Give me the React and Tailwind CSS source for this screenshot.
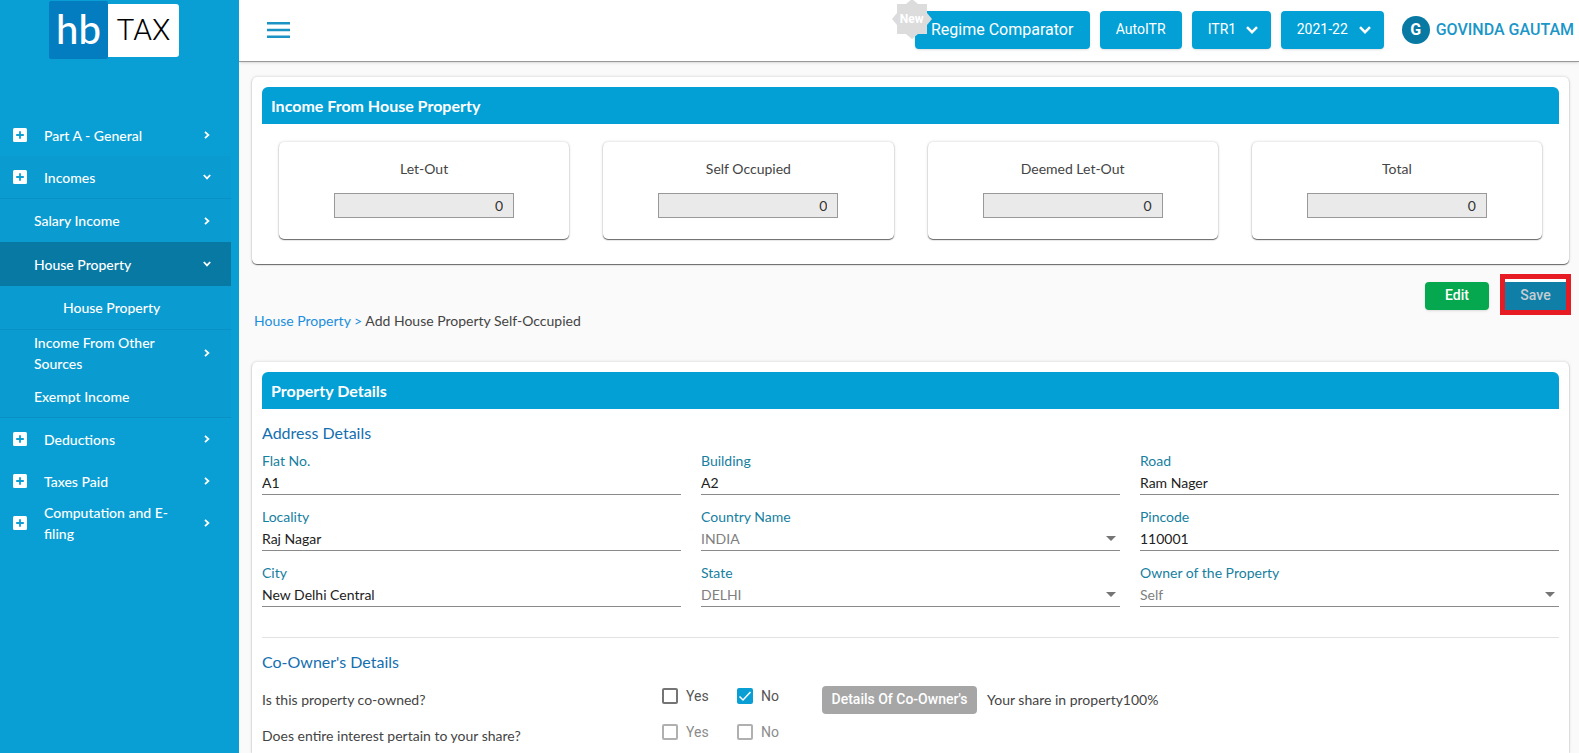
import { useState } from "react";

const NAV_BEFORE = [{ label: "Part A - General" }];
const NAV_AFTER = [
  { label: "Deductions" },
  { label: "Taxes Paid" },
  { label: "Computation and E-filing" },
];

const TOTALS = ["Let-Out", "Self Occupied", "Deemed Let-Out", "Total"];

const FIELDS = [
  { id: "flat", label: "Flat No.", value: "A1" },
  { id: "building", label: "Building", value: "A2" },
  { id: "road", label: "Road", value: "Ram Nager" },
  { id: "locality", label: "Locality", value: "Raj Nagar" },
  { id: "country", label: "Country Name", value: "INDIA", select: true },
  { id: "pincode", label: "Pincode", value: "110001" },
  { id: "city", label: "City", value: "New Delhi Central" },
  { id: "state", label: "State", value: "DELHI", select: true },
  { id: "owner", label: "Owner of the Property", value: "Self", select: true },
];

function Chevron({ down }) {
  return (
    <svg
      viewBox="0 0 10 10"
      className={`h-[10px] w-[10px] shrink-0 ${down ? "rotate-90" : ""}`}
      fill="none"
      stroke="currentColor"
      strokeWidth="1.8"
      aria-hidden="true"
    >
      <path d="M3 1.8 6.4 5 3 8.2" />
    </svg>
  );
}

function PlusBox() {
  return (
    <svg viewBox="0 0 14 14" className="h-[14px] w-[14px] shrink-0" aria-hidden="true">
      <rect width="14" height="14" rx="1.5" fill="#fff" />
      <path d="M7 3.2v7.6M3.2 7h7.6" stroke="#0b9ed3" strokeWidth="1.8" />
    </svg>
  );
}

function NavItem({ label, open }) {
  return (
    <button
      type="button"
      aria-expanded={Boolean(open)}
      className="flex h-[42px] w-full items-center pl-[13px] pr-[19px] text-left leading-[21px]"
    >
      <PlusBox />
      <span className="ml-[17px] w-[140px]">{label}</span>
      <span className="ml-auto">
        <Chevron down={open} />
      </span>
    </button>
  );
}

function Logo() {
  return (
    <a href="#home" className="ml-[49px] mt-[1px] flex w-fit items-center">
      <span className="flex h-[58px] w-[59px] items-center justify-center rounded-[2px] bg-[#047cc0] pb-[2px] text-[40px] font-medium leading-none text-white">
        hb
      </span>
      <span className="flex h-[53px] w-[71px] items-center justify-center rounded-r-[3px] bg-white font-['Roboto',sans-serif] text-[30px] font-light leading-none text-black">
        TAX
      </span>
    </a>
  );
}

function Sidebar() {
  return (
    <nav className="w-[239px] shrink-0 bg-[#0a9fd4] pr-2 text-[14px] font-medium text-white">
      <Logo />
      <div className="mt-[55px]">
        {NAV_BEFORE.map((item) => (
          <NavItem key={item.label} {...item} />
        ))}
        <div className="bg-[#0a9bd0]">
          <NavItem label="Incomes" open />
          <div className="border-y border-[#0990c4] leading-[21px]">
            <button type="button" className="flex h-[43px] w-full items-center justify-between pl-[34px] pr-[19px]">
              Salary Income
              <Chevron />
            </button>
            <button
              type="button"
              className="flex h-[44px] w-full items-center justify-between bg-[#0779a3] pl-[34px] pr-[19px]"
            >
              House Property
              <Chevron down />
            </button>
            <a href="#house-property" className="flex h-[44px] items-center border-b border-[#0990c4] pl-[63px]">
              House Property
            </a>
            <button
              type="button"
              className="flex h-[45px] w-full items-center justify-between pl-[34px] pr-[19px] text-left"
            >
              <span className="w-[130px]">Income From Other Sources</span>
              <Chevron />
            </button>
            <a href="#exempt-income" className="flex h-[42px] items-center pl-[34px]">
              Exempt Income
            </a>
          </div>
        </div>
        {NAV_AFTER.map((item) => (
          <NavItem key={item.label} {...item} />
        ))}
      </div>
    </nav>
  );
}

function HeaderSelect({ label, value, className }) {
  return (
    <div className={`relative ${className}`}>
      <select
        aria-label={label}
        defaultValue={value}
        className="h-[38px] w-full appearance-none rounded bg-[#03a0d6] pl-4 pr-8 text-[14px] text-white shadow"
      >
        <option>{value}</option>
      </select>
      <svg
        viewBox="0 0 12 8"
        className="pointer-events-none absolute right-[13px] top-[15px] h-2 w-3"
        fill="none"
        stroke="#fff"
        strokeWidth="2.5"
        aria-hidden="true"
      >
        <path d="m1 1.2 5 5 5-5" />
      </svg>
    </div>
  );
}

function Header() {
  return (
    <header className="flex h-[62px] items-center border-b border-[#999] bg-white pb-[2px] pl-7 pr-[5px] font-['Roboto',sans-serif] shadow">
      <button type="button" aria-label="Toggle menu">
        <svg viewBox="0 0 23 16" className="h-4 w-[23px]" aria-hidden="true">
          <path d="M0 1.2h23M0 8h23M0 14.8h23" stroke="#1b93c4" strokeWidth="2.4" />
        </svg>
      </button>
      <div className="ml-auto flex items-center gap-[10px]">
        <div className="relative">
          <button
            type="button"
            className="h-[38px] w-[175px] rounded bg-[#03a0d6] text-[16px] text-white shadow"
          >
            Regime Comparator
          </button>
          <span className="absolute -left-6 -top-[13px] flex h-[42px] w-[42px] items-center justify-center text-[12px] font-bold text-white">
            <svg viewBox="0 0 42 42" className="absolute inset-0" aria-hidden="true">
              <path
                d="M21 1 27 6 36 6 36 15 41 21 36 27 36 36 27 36 21 41 15 36 6 36 6 27 1 21 6 15 6 6 15 6z"
                fill="#dcdcdc"
              />
            </svg>
            <span className="relative">New</span>
          </span>
        </div>
        <button type="button" className="h-[38px] w-[82px] rounded bg-[#03a0d6] text-[14px] text-white shadow">
          AutoITR
        </button>
        <HeaderSelect label="ITR form" value="ITR1" className="w-[79px]" />
        <HeaderSelect label="Assessment year" value="2021-22" className="w-[103px]" />
      </div>
      <button type="button" className="ml-[18px] flex items-center gap-[6px] text-[16px] font-medium text-[#1b96c8]">
        <span className="flex h-7 w-7 items-center justify-center rounded-full bg-[#0779a3] text-[16px] font-bold text-white">
          G
        </span>
        GOVINDA GAUTAM
      </button>
    </header>
  );
}

function CardTitle({ children }) {
  return (
    <h2 className="flex h-[37px] items-center rounded-t-[6px] bg-[#03a0d6] px-[9px] text-[16px] font-bold text-white">
      {children}
    </h2>
  );
}

function Summary() {
  return (
    <section className="rounded-[5px] bg-white p-[10px] pb-[25px] shadow-[0_1px_1px_#666,0_0_3px_#ccc]">
      <CardTitle>Income From House Property</CardTitle>
      <div className="mt-[18px] grid grid-cols-4 gap-[34px] px-[17px]">
        {TOTALS.map((name) => (
          <label
            key={name}
            className="flex h-[97px] flex-col items-center rounded-[5px] pt-[17px] text-[14px] leading-5 text-[#444] shadow-[0_1px_1px_#666,0_0_3px_#ccc]"
          >
            {name}
            <input
              readOnly
              value="0"
              className="mt-[14px] h-[25px] w-[180px] border border-[#999] bg-[#eaeaea] px-[10px] text-right text-[14px] text-[#333]"
            />
          </label>
        ))}
      </div>
    </section>
  );
}

function Field({ id, label, value, select }) {
  return (
    <div>
      <label htmlFor={id} className="block h-[22px] text-[14px] leading-[22px] text-[#16809f]">
        {label}
      </label>
      {select ? (
        <div className="relative">
          <select
            id={id}
            defaultValue={value}
            className="block h-[23px] w-full appearance-none border-b border-[#8a8a8a] pb-[2px] text-[14px] text-[#808080]"
          >
            <option>{value}</option>
          </select>
          <svg
            viewBox="0 0 10 5"
            className="pointer-events-none absolute right-1 top-2 h-[5px] w-[10px]"
            fill="#757575"
            aria-hidden="true"
          >
            <path d="M0 0h10L5 5z" />
          </svg>
        </div>
      ) : (
        <input
          id={id}
          defaultValue={value}
          className="block h-[23px] w-full border-b border-[#8a8a8a] pb-[2px] text-[14px] text-[#222]"
        />
      )}
    </div>
  );
}

function Check({ label, checked, disabled, onChange, className }) {
  return (
    <label
      className={`flex h-5 items-center font-['Roboto',sans-serif] text-[14px] ${
        disabled ? "text-[#8c8c8c]" : "text-[#555]"
      } ${className}`}
    >
      <span className="relative mr-2 h-4 w-4">
        <input
          type="checkbox"
          checked={checked}
          disabled={disabled}
          onChange={onChange}
          className={`block h-4 w-4 appearance-none rounded-[2px] border-2 checked:border-[#0a9fd4] checked:bg-[#0a9fd4] ${
            disabled ? "border-[#b0b0b0]" : "border-[#757575]"
          }`}
        />
        {checked && (
          <svg
            viewBox="0 0 16 16"
            className="pointer-events-none absolute inset-0"
            fill="none"
            stroke="#fff"
            strokeWidth="1.5"
            aria-hidden="true"
          >
            <path d="m2.5 8.5 3.5 3.5 7.5-8" />
          </svg>
        )}
      </span>
      {label}
    </label>
  );
}

function PropertyDetails() {
  const [coOwned, setCoOwned] = useState(false);

  return (
    <section className="mt-[31px] flex-1 rounded-t-[5px] bg-white p-[10px] pb-0 shadow-[0_1px_1px_#666,0_0_3px_#ccc]">
      <CardTitle>Property Details</CardTitle>
      <h3 className="mt-[14px] text-[16px] leading-5 text-[#146fb0]">Address Details</h3>
      <div className="mt-[7px] grid grid-cols-3 gap-x-5 gap-y-[11px]">
        {FIELDS.map((field) => (
          <Field key={field.id} {...field} />
        ))}
      </div>
      <hr className="mt-[30px] border-[#e2e2e2]" />
      <h3 className="mt-[14px] text-[16px] leading-5 text-[#146fb0]">Co-Owner's Details</h3>

      <div className="mt-[14px] flex h-7 items-center text-[14px] leading-5 text-[#444]">
        <span className="w-[400px]">Is this property co-owned?</span>
        <Check label="Yes" checked={coOwned} onChange={() => setCoOwned(true)} className="-mt-2 w-[75px]" />
        <Check label="No" checked={!coOwned} onChange={() => setCoOwned(false)} className="-mt-2 w-[85px]" />
        <button
          type="button"
          disabled={!coOwned}
          className="h-7 w-[155px] rounded bg-[#a6a6a6] pb-[2px] font-['Roboto',sans-serif] text-[14px] font-medium text-white"
        >
          Details Of Co-Owner's
        </button>
        <span className="ml-[10px]">Your share in property100%</span>
      </div>
      <div className="mt-2 flex h-7 items-center text-[14px] leading-5 text-[#444]">
        <span className="w-[400px]">Does entire interest pertain to your share?</span>
        <Check label="Yes" checked={false} disabled className="-mt-2 w-[75px]" />
        <Check label="No" checked={false} disabled className="-mt-2 w-[85px]" />
      </div>
    </section>
  );
}

export default function App() {
  return (
    <div className="flex min-h-screen bg-[#fafafa] font-['Lato',sans-serif]">
      <Sidebar />
      <div className="flex min-w-0 flex-1 flex-col overflow-hidden">
        <Header />
        <main className="flex flex-1 flex-col pl-[13px] pr-[10px] pt-[15px]">
          <Summary />
          <div className="-mr-[2px] mt-[10px] flex items-center justify-end gap-[11px] font-['Roboto',sans-serif] text-[14px] font-medium">
            <button type="button" className="mt-[3px] h-7 w-16 rounded bg-[#05a84e] pb-[2px] text-white shadow">
              Edit
            </button>
            <div className="border-[5px] border-[#e61b23] bg-white pt-[3px]">
              <button type="button" className="block h-7 w-[61px] bg-[#0f7fa8] pb-[2px] text-[#c5cdd1]">
                Save
              </button>
            </div>
          </div>
          <div className="-mt-1 pl-[2px] text-[14px] leading-5 text-[#444]">
            <a href="#house-property" className="text-[#1b8fdc]">
              House Property &gt;
            </a>{" "}
            Add House Property Self-Occupied
          </div>
          <PropertyDetails />
        </main>
      </div>
    </div>
  );
}
